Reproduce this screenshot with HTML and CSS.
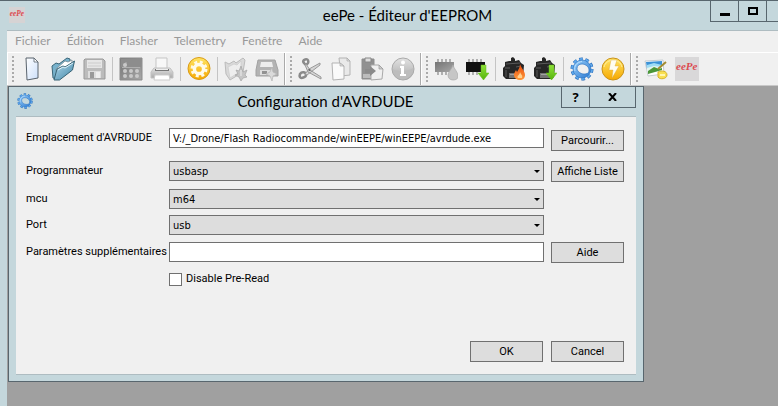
FILE: index.html
```html
<!DOCTYPE html>
<html lang="fr">
<head>
  <meta charset="UTF-8">
  <title>eePe - Éditeur d'EEPROM</title>
  <link rel="stylesheet" href="styles.css">
</head>
<body>
  <!-- Shared gradients and shapes -->
  <svg class="defs" width="0" height="0" aria-hidden="true">
    <defs>
      <linearGradient id="blue" x1="0" y1="0" x2="1" y2="1"><stop offset="0" stop-color="#9ad0fa"/><stop offset="1" stop-color="#2a78d0"/></linearGradient>
      <linearGradient id="page" x1="0" y1="0" x2="1" y2="1"><stop offset="0" stop-color="#ffffff"/><stop offset="1" stop-color="#ccdffa"/></linearGradient>
      <linearGradient id="folder" x1="0" y1="0" x2="1" y2="1"><stop offset="0" stop-color="#b9dced"/><stop offset="1" stop-color="#3e86a8"/></linearGradient>
      <linearGradient id="grey" x1="0" y1="0" x2="0" y2="1"><stop offset="0" stop-color="#e2e2e2"/><stop offset="1" stop-color="#a9a9a9"/></linearGradient>
      <linearGradient id="dark" x1="0" y1="0" x2="1" y2="1"><stop offset="0" stop-color="#747474"/><stop offset="1" stop-color="#a8a8a8"/></linearGradient>
      <linearGradient id="gold" x1="0" y1="0" x2="0" y2="1"><stop offset="0" stop-color="#ffe566"/><stop offset="1" stop-color="#f6a800"/></linearGradient>
      <linearGradient id="green" x1="0" y1="0" x2="0" y2="1"><stop offset="0" stop-color="#8fe03a"/><stop offset="1" stop-color="#55b40c"/></linearGradient>
      <linearGradient id="fire" x1="0" y1="0" x2="0" y2="1"><stop offset="0" stop-color="#e8480a"/><stop offset="1" stop-color="#ff9a3c"/></linearGradient>
    </defs>
    <symbol id="gear" viewBox="0 0 24 24">
      <circle cx="12" cy="12" r="9.5" fill="none" stroke="#2467b4" stroke-width="4" stroke-dasharray="3.4 2.57"/>
      <circle cx="12" cy="12" r="9.4" fill="none" stroke="#62abee" stroke-width="3" stroke-dasharray="3 2.91" stroke-dashoffset="-.2"/>
      <path fill="url(#blue)" stroke="#2c73c2" stroke-width=".7" fill-rule="evenodd" d="M12 3a9 9 0 1 0 0 18 9 9 0 0 0 0-18zM12 7c3 0 7 2.500 7 6s-2 4-5 4S7 14.500 7 11.500 9 7 12 7z"/>
      <path fill="none" stroke="#b9e0ff" d="M5 14c-1.500-5 2-9 7-9.500"/>
    </symbol>
    <symbol id="chip" viewBox="0 0 24 24">
      <path fill="none" stroke="#9a9a9a" stroke-width="1.500" d="M4 2v4M8 2v4M12 2v4M16 2v4M4 15v3M8 15v3M12 15v3"/>
      <path stroke="none" d="M1 5h19v10H1z"/>
    </symbol>
    <symbol id="bag" viewBox="0 0 24 24">
      <path fill="#262626" d="M9 4V1l2-1 2 2v2l4-1 2 3 3 2-1 12-2 2H4l-3-3V11l2-2V5l4-1z"/>
      <path fill="none" stroke="#5a5a5a" d="M4 7l14-1M3 11h5M14 10l5-1M4 20v-7"/>
      <path fill="#737373" d="M7 16h10v5H7z"/>
      <path fill="#a0a0a0" d="M8 17h8v1H8z"/>
    </symbol>
    <symbol id="down" viewBox="0 0 24 24"><path fill="url(#green)" stroke="#62bd18" stroke-width=".5" d="M16 8h5v8h3l-5.500 7-5.500-7h3z"/></symbol>
    <symbol id="flame" viewBox="0 0 24 24"><path d="M18 7c1 4 5 7 5 11 0 3-2 5-5 5s-6-2-6-5c0-2 1-3 2-5l1 2c1-2 3-4 3-8z"/></symbol>
  </svg>

  <div class="window">
    <header class="titlebar">
      <svg class="app-icon" viewBox="0 0 24 24"><path fill="#d6d3d4" d="M0 0h24v24H0z"/><text x="1" y="13" class="logo-text">eePe</text></svg>
      <h1>eePe - Éditeur d'EEPROM</h1>
      <div class="window-buttons">
        <button type="button" aria-label="Réduire"><svg width="12" height="12"><path d="M1 8h10v3H1z"/></svg></button>
        <button type="button" aria-label="Agrandir"><svg width="12" height="12"><path fill="none" stroke="#000" stroke-width="2" d="M2 3h8v6H2z"/></svg></button>
        <button type="button" aria-label="Fermer"></button>
      </div>
    </header>

    <main class="client">
      <nav class="menubar">
        <a href="#">Fichier</a>
        <a href="#">Édition</a>
        <a href="#">Flasher</a>
        <a href="#">Telemetry</a>
        <a href="#">Fenêtre</a>
        <a href="#">Aide</a>
      </nav>

      <div class="toolbars">
        <div class="toolbar">
          <button type="button" aria-label="Nouveau"><svg viewBox="0 0 24 24"><path fill="url(#page)" stroke="#59636d" d="M6 1h8l4 4v16L7 23z"/><path fill="#fff" stroke="#59636d" stroke-width=".8" d="M14 1v4h4z"/></svg></button>
          <button type="button" aria-label="Ouvrir"><svg viewBox="0 0 24 24"><path fill="#78b2cc" stroke="#3b6679" d="M1 9l4-3 3 1 8-6 3 1v4L5 22l-3-1z"/><path fill="#fff" stroke="#778c96" stroke-width=".8" d="M5 12l9-8 3 1 4-2v8L6 20z"/><path fill="url(#folder)" stroke="#386375" d="M3 23l3-11 6-3 2 1 9.500-6-2 9-13 10z"/><path fill="none" stroke="#dff2fa" d="M7 13l5-3 2 1 8-5"/></svg></button>
          <button type="button" aria-label="Enregistrer"><svg viewBox="0 0 24 24"><path fill="#bcbcbc" stroke="#999" d="M3 2h18l2 2v18H2V3z"/><path fill="#e6e6e6" d="M5 3h15v8H5z"/><path stroke="#ccc" d="M6 6h13M6 9h13"/><path fill="#ddd" d="M6 14h13v7H6z"/><path fill="#999" d="M8 15h4v6H8z"/><path fill="#eee" d="M14 15h4v6h-4z"/></svg></button>
          <span class="separator"></span>
          <button type="button" aria-label="Simuler"><svg viewBox="0 0 24 24"><path fill="url(#dark)" stroke="#8b8b8b" d="M1 1h22v22H1z"/><path fill="#8d8d8d" d="M2 2h20v8H2z"/><path stroke="#b0b0b0" d="M7 8V5M3 10.500h18"/><g fill="#c9c9c9"><circle cx="6" cy="8" r="2"/><circle cx="6" cy="14" r="2"/><circle cx="12" cy="14" r="2"/><circle cx="18" cy="14" r="2"/><circle cx="6" cy="19" r="2"/><circle cx="12" cy="19" r="2"/><circle cx="18" cy="19" r="2"/></g></svg></button>
          <button type="button" aria-label="Imprimer"><svg viewBox="0 0 24 24"><path fill="#f8f8f8" stroke="#c5c5c5" d="M6 1h11v11H6z"/><path fill="url(#grey)" stroke="#c1c1c1" d="M4 11h16l3 4v6H1v-6z"/><path fill="#777" d="M5 12h14v2H5z"/><path fill="#eee" d="M6 12h12v1H6z"/><path fill="#fff" stroke="#ccc" d="M5 18h14l1 5H4z"/></svg></button>
          <span class="separator"></span>
          <button type="button" aria-label="Préférences"><svg viewBox="0 0 24 24"><circle cx="12" cy="11.500" r="11" fill="url(#gold)" stroke="#d99b16"/><circle cx="12" cy="12" r="6.500" fill="none" stroke="#fff9e5" stroke-width="4" stroke-dasharray="2.700 2.400"/><circle cx="12" cy="12" r="4.600" fill="none" stroke="#fffbea" stroke-width="3.500"/></svg></button>
          <span class="separator"></span>
          <button type="button" aria-label="Charger l'assistant"><svg viewBox="0 0 24 24"><path fill="#d9d9d9" stroke="#bbb" d="M1 5l4 2 5-3 2 2 7-5 2 2-2 12-13 8-4-6z"/><path fill="#eee" stroke="#ccc" stroke-width=".7" d="M4 10l6-3 3 1 4-4v10L6 21z"/><path fill="#c5c5c5" stroke="#a5a5a5" stroke-width=".7" d="M12 13l3 1 2-5 2 6 4-2-2 5 2 2-4 1-2 3-2-4-4-2 3-1z"/><path stroke="#eee" d="M17 13v6"/></svg></button>
          <button type="button" aria-label="Enregistrer l'assistant"><svg viewBox="0 0 24 24"><path fill="#b3b3b3" stroke="#a2a2a2" d="M3 3h17l3 10v6H1v-6z"/><path fill="#ededed" d="M6 5h11l1 5H5z"/><path fill="#dedede" d="M5 13h11v5H5z"/><path fill="#929292" d="M7 14h5v3H7z"/><path fill="#dadada" stroke="#b5b5b5" stroke-width=".7" d="M17 10l1 5 4 2-4 2-1 5-2-5-4-2 4-2z"/></svg></button>
        </div>

        <div class="toolbar">
          <button type="button" aria-label="Couper"><svg viewBox="0 0 24 24"><path fill="none" stroke="#8a8a8a" stroke-width="2.500" d="M6 3c3-2 5 0 4 3-1 2-3 2-4 0-1-1-1-2 0-3zM2 17c2-3 6-2 6 1 0 2-5 4-6 2-1-1 0-2 0-3z"/><path fill="#d5d5d5" stroke="#999" d="M8 7l4 6 11 7v2l-13-7-3-7zM7 17l4-5 11-6v2L9 18z"/><circle cx="11.500" cy="13" r="1" fill="#666"/></svg></button>
          <button type="button" aria-label="Copier"><svg viewBox="0 0 24 24"><path fill="#e9e9e9" stroke="#b3b3b3" d="M10 1h8l3 3v14l-9 1z"/><path fill="#fafafa" stroke="#b3b3b3" d="M3 6h8l4 3v13l-11 1z"/><path fill="#ddd" stroke="#aaa" stroke-width=".7" d="M11 6v3h4zM18 1v3h3z"/></svg></button>
          <button type="button" aria-label="Coller"><svg viewBox="0 0 24 24"><path fill="#919191" stroke="#8e8e8e" d="M2 2h12v20H2z"/><path fill="#ddd" stroke="#888" d="M5 1h6v4H5z"/><path fill="#bcbcbc" d="M3 17h10v4H3z"/><path fill="#f0f0f0" stroke="#aaa" d="M11 8h8l4 4-1 10-11 1z"/><path fill="#8b8b8b" d="M5 12h5V9l6 5-6 5v-3H5z"/><path fill="#ccc" stroke="#999" stroke-width=".7" d="M19 8v4h4z"/></svg></button>
          <button type="button" aria-label="Informations"><svg viewBox="0 0 24 24"><circle cx="12" cy="12" r="11" fill="url(#grey)" stroke="#aaa"/><path fill="#bdbdbd" d="M2 12c5 3 14 3 20-1 0 15-20 15-20 1z"/><circle cx="12" cy="5.500" r="2" fill="#fff"/><path fill="#fff" d="M9 9h4v8h2v2H9v-2h1v-6H9z"/></svg></button>
        </div>

        <div class="toolbar">
          <button type="button" aria-label="Écrire la puce"><svg viewBox="0 0 24 24"><use href="#chip" fill="url(#dark)"/><path fill="#c6c6c6" stroke="#aaa" stroke-width=".7" d="M19 8c1 4 5 7 5 11 0 3-2 4-5 4s-5-2-5-5 4-6 5-10z"/></svg></button>
          <button type="button" aria-label="Lire la puce"><svg viewBox="0 0 24 24"><use href="#chip" fill="#111"/><use href="#down"/></svg></button>
          <span class="separator"></span>
          <button type="button" aria-label="Écrire la radio"><svg viewBox="0 0 24 24"><use href="#bag"/><use href="#flame" fill="url(#fire)"/><path fill="#ffd08c" d="M18 15c1 3 3 3 2 6h-4c-2-2 2-3 2-6z"/></svg></button>
          <button type="button" aria-label="Lire la radio"><svg viewBox="0 0 24 24"><use href="#bag"/><use href="#down"/></svg></button>
          <span class="separator"></span>
          <button type="button" aria-label="Configurer"><svg viewBox="0 0 24 24"><use href="#gear"/></svg></button>
          <button type="button" aria-label="Fusibles"><svg viewBox="0 0 24 24"><circle cx="12" cy="12" r="11" fill="url(#gold)" stroke="#c9921a"/><path fill="none" stroke="#fff0a0" d="M3 10c2-9 16-9 18 0"/><path fill="#fffdf0" stroke="#d9a83a" stroke-width=".4" d="M10 3h6l-2 6h4l-7 12 1-8H8z"/></svg></button>
        </div>

        <div class="toolbar last">
          <button type="button" aria-label="Écran de démarrage"><svg viewBox="0 0 24 24"><path fill="#fff" stroke="#c5ccd0" d="M1 4l18-1 1 14-16 2z"/><path fill="#3a91d6" d="M2 5l16-1v5L3 12z"/><path fill="#9fdcf4" d="M3 8l7-2 8 2v3L3 12z"/><path fill="#e4f4ee" d="M3 11l7-2 8 1v4L4 16z"/><path fill="#4b9738" d="M4 14l6-4 5 2 3-1v2l-14 4z"/><path fill="none" stroke="#a28b30" stroke-width="2" d="M14 12l8-7"/><path fill="#f8df51" stroke="#d6b32c" d="M14 15c4-2 9-1 9 3s-7 5-9 2v-5z"/><path fill="#fff6b0" d="M16 17h5v2h-5z"/></svg></button>
          <button type="button" aria-label="À propos"><svg viewBox="0 0 24 24"><path fill="#d9d8d9" d="M0 0h24v24H0z"/><text x="1" y="13" class="logo-text">eePe</text></svg></button>
        </div>
      </div>

      <div class="workspace">
        <form class="dialog" role="dialog" aria-labelledby="dialog-title">
          <div class="dialog-titlebar">
            <svg class="app-icon" viewBox="0 0 24 24"><use href="#gear"/></svg>
            <h2 id="dialog-title">Configuration d'AVRDUDE</h2>
            <div class="window-buttons">
              <button type="button">?</button>
              <button type="button" class="close" aria-label="Fermer"><svg width="10" height="8"><path fill="none" stroke="#000" stroke-width="2" d="M1 0l7 8M8 0L1 8"/></svg></button>
            </div>
          </div>

          <div class="dialog-body">
            <div class="fields">
              <label for="path">Emplacement d'AVRDUDE</label>
              <input class="field" type="text" id="path" value="V:/_Drone/Flash Radiocommande/winEEPE/winEEPE/avrdude.exe">
              <button type="button" class="btn browse">Parcourir...</button>

              <label for="programmer">Programmateur</label>
              <div class="select"><select class="field" id="programmer"><option>usbasp</option></select></div>
              <button type="button" class="btn">Affiche Liste</button>

              <label for="mcu">mcu</label>
              <div class="select"><select class="field" id="mcu"><option>m64</option></select></div>

              <label for="port">Port</label>
              <div class="select"><select class="field" id="port"><option>usb</option></select></div>

              <label for="extra">Paramètres supplémentaires</label>
              <input class="field" type="text" id="extra">
              <button type="button" class="btn">Aide</button>

              <label class="check"><input type="checkbox">Disable Pre-Read</label>
            </div>

            <div class="actions">
              <button type="submit" class="btn">OK</button>
              <button type="button" class="btn">Cancel</button>
            </div>
          </div>
        </form>
      </div>
    </main>
  </div>
</body>
</html>
```
FILE: styles.css
```css
* {
  box-sizing: border-box;
}

body {
  margin: 0;
  overflow: hidden;
  font-family: Roboto, "Noto Sans", sans-serif;
  font-size: 11px;
  color: #000;
}

button {
  padding: 0;
  font: inherit;
  color: inherit;
}

.defs {
  position: absolute;
}

/* Main window */
.window {
  display: flex;
  flex-direction: column;
  height: 100vh;
  padding-left: 7px;
  background: #c4d7dc;
  border-top: 1px solid #58666e;
}

.titlebar,
.dialog-titlebar {
  display: flex;
  align-items: flex-start;
  height: 29px;
}

.titlebar h1,
.dialog-titlebar h2 {
  flex: 1;
  margin: 0;
  font-family: Lato, "Open Sans", sans-serif;
  font-size: 15px;
  font-weight: 400;
  line-height: 29px;
  text-align: center;
}

.titlebar h1 {
  padding-left: 80px;
}

.app-icon {
  width: 16px;
  height: 16px;
  margin: 6px 0 0 2px;
}

.logo-text {
  font-family: "Liberation Serif", serif;
  font-size: 11px;
  font-style: italic;
  font-weight: 700;
  fill: #dc4a50;
}

.window-buttons {
  display: flex;
}

.window-buttons button {
  display: flex;
  align-items: center;
  justify-content: center;
  width: 28px;
  height: 21px;
  background: none;
  border: 1px solid #58666e;
  border-top: 0;
  border-right: 0;
}

.titlebar button:last-child {
  width: 12px;
}

/* Menu and toolbars */
.client {
  display: flex;
  flex: 1;
  flex-direction: column;
  border-top: 1px solid #aebcc1;
  background: #f0f0f0;
}

.menubar {
  display: flex;
  gap: 16px;
  height: 21px;
  padding-left: 8px;
  font-family: Lato, "Open Sans", sans-serif;
  font-size: 12px;
  line-height: 20px;
}

.menubar a {
  color: #999;
  text-decoration: none;
}

.toolbars {
  display: flex;
  height: 34px;
  border-top: 1px solid #fff;
  border-bottom: 1px solid #c8c8c8;
}

.toolbar {
  display: flex;
  align-items: center;
  padding-right: 2px;
  border-left: 1px solid #fff;
  border-right: 1px solid #aaa;
}

.toolbar::before {
  content: "";
  width: 2px;
  height: 26px;
  margin: 0 2px 0 4px;
  background: repeating-linear-gradient(#aaa 0 2px, transparent 2px 4px);
}

.toolbar.last {
  border-right: 0;
}

.toolbar button {
  width: 31px;
  height: 31px;
  background: none;
  border: 0;
}

.toolbar svg {
  display: block;
  width: 24px;
  height: 24px;
  margin: 0 auto;
}

.separator {
  width: 1px;
  height: 24px;
  margin: 0 2px 0 3px;
  background: #c4c4c4;
}

.workspace {
  position: relative;
  flex: 1;
  background: #a0a0a0;
}

/* Dialog */
.dialog {
  position: absolute;
  top: 0;
  left: 1px;
  width: calc(100% - 16px);
  max-width: 636px;
  padding: 0 7px 6px;
  background: #c4d7dc;
  border: 1px solid #58666e;
}

.dialog-titlebar .app-icon {
  margin-left: 1px;
}

.dialog-titlebar h2 {
  padding-left: 57px;
}

.dialog-titlebar button {
  font-family: "Open Sans", sans-serif;
  font-size: 13px;
  font-weight: 700;
}

.dialog-titlebar .close {
  width: 47px;
  border-right: 1px solid #58666e;
}

.dialog-body {
  padding: 11px 12px 12px 10px;
  background: #f0f0f0;
  border-top: 1px solid #aebcc1;
  border-bottom: 1px solid #aebcc1;
}

.fields {
  display: grid;
  grid-template-columns: 136px 1fr 73px;
  grid-template-rows: 27px 22px 20px 21px 21px 20px;
  gap: 6px 7px;
  align-items: start;
}

.fields label {
  grid-column: 1;
  line-height: 20px;
  white-space: nowrap;
}

.field {
  display: block;
  width: 100%;
  height: 20px;
  margin: 0;
  padding: 0 3px;
  font-family: "DejaVu Sans Condensed", "DejaVu Sans", sans-serif;
  font-size: 11px;
  color: inherit;
  background: #fff;
  border: 1px solid #707070;
  border-radius: 0;
}

.select {
  position: relative;
}

.select .field {
  appearance: none;
  background: #ddd;
}

/* Drop-down arrow */
.select::after {
  content: "";
  position: absolute;
  top: 9px;
  right: 4px;
  border: 3px solid transparent;
  border-top-color: #000;
  border-bottom: 0;
  pointer-events: none;
}

.btn {
  width: 73px;
  height: 21px;
  background: #ddd;
  border: 1px solid #707070;
}

.browse {
  margin-top: 2px;
}

.fields .check {
  display: flex;
  grid-column: 2;
  gap: 4px;
  align-items: center;
}

.check input {
  width: 13px;
  height: 13px;
  margin: 0;
  appearance: none;
  background: #fff;
  border: 1px solid #707070;
}

.check input:checked {
  background: #707070;
}

.actions {
  display: flex;
  gap: 8px;
  justify-content: flex-end;
  margin-top: 52px;
}
```
